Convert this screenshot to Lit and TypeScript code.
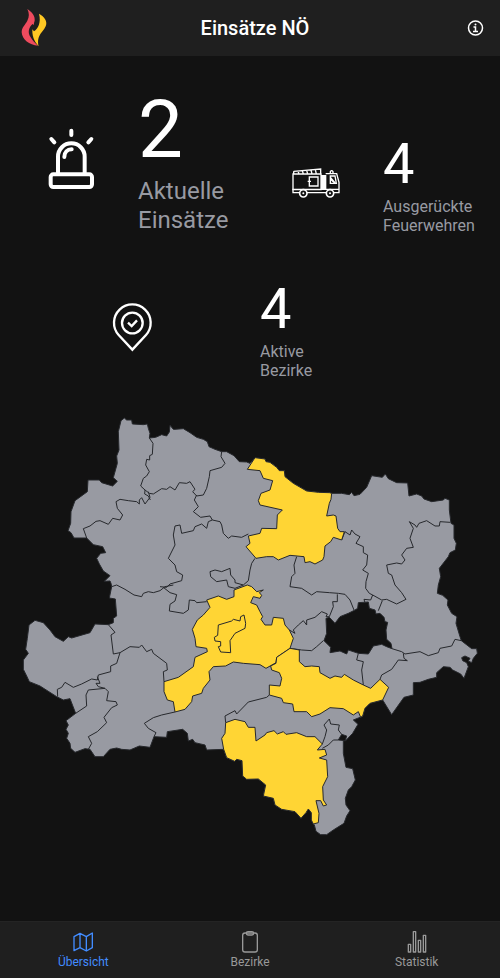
import { LitElement, html, svg, css } from "lit";
import { customElement, state } from "lit/decorators.js";
import { classMap } from "lit/directives/class-map.js";

const OUTLINE =
  "363,32 373,24 380,30 395,30 397,42 430,44 442,42 445,55 450,70 448,84 467,82 485,74 500,78 508,66 510,46 520,58 525,58 550,56 570,68 590,82 610,88 622,95 627,110 645,118 665,125 680,125 702,137 718,155 740,156 750,160 765,143 795,147 798,155 810,157 830,172 838,182 853,182 855,200 880,220 920,243 955,247 988,248 995,250 1025,250 1048,254 1055,247 1062,257 1080,253 1100,232 1115,197 1147,202 1156,192 1165,206 1190,218 1223,219 1227,258 1250,252 1265,258 1272,267 1295,275 1330,270 1335,265 1348,270 1348,300 1353,340 1362,345 1362,385 1369,400 1366,420 1350,428 1345,440 1318,475 1322,500 1315,525 1312,550 1328,556 1344,570 1342,585 1355,610 1371,620 1368,640 1380,680 1384,692 1415,716 1430,716 1432,730 1420,745 1415,758 1405,753 1410,745 1395,738 1385,743 1388,752 1400,758 1405,770 1392,805 1382,792 1358,780 1350,772 1330,770 1310,788 1310,802 1285,808 1260,817 1240,818 1240,855 1212,862 1175,914 1148,870 1110,880 1095,895 1088,918 1085,920 1060,930 1074,943 1058,970 1037,992 1030,992 1030,1030 1038,1072 1058,1076 1066,1110 1055,1130 1045,1140 1036,1165 1038,1185 1050,1202 1040,1218 1032,1240 1000,1260 980,1274 962,1274 948,1264 943,1245 940,1242 934,1230 934,1208 925,1197 918,1208 903,1225 885,1205 845,1198 825,1185 820,1165 790,1158 797,1125 775,1107 740,1108 728,1098 726,1052 710,1048 704,1054 680,1043 671,1018 620,1020 615,1005 585,998 578,988 565,993 562,970 548,958 502,965 500,982 462,980 450,1012 418,1008 390,1020 365,1018 350,1014 330,1018 310,1040 285,1040 270,1018 255,1016 225,1027 212,1015 210,1000 200,985 205,970 198,958 205,945 198,932 227,910 210,866 190,870 170,860 120,828 88,815 80,798 70,778 70,750 85,730 77,718 82,685 87,645 105,631 130,638 150,660 165,680 190,694 205,680 215,684 270,668 285,642 325,644 340,638 340,625 350,618 346,567 328,564 335,530 333,520 330,513 313,514 330,497 310,483 298,462 290,445 302,430 317,428 308,410 280,404 260,384 222,384 213,368 204,362 212,340 213,305 225,272 262,245 264,210 298,210 305,218 338,228 352,214 340,203 352,160 350,138 357,120 355,65";

const ACTIVE_DISTRICTS = [
  "742,178 765,143 795,147 798,155 810,157 830,172 838,182 853,182 855,200 880,220 920,243 955,247 988,248 995,250 993,268 988,280 980,318 1000,315 1008,318 1013,355 1020,365 1033,365 1025,390 1000,382 992,395 975,408 972,440 968,450 945,462 930,455 915,458 912,440 870,436 835,450 820,440 800,440 768,445 738,410 750,400 745,378 780,370 785,355 830,356 832,315 847,300 780,285 775,272 783,250 810,240 818,212 790,205 780,182",
  "742,525 755,530 770,545 790,540 778,548 785,556 780,565 760,560 752,578 770,585 780,605 788,620 783,628 795,645 815,645 820,622 850,625 855,645 868,660 880,685 870,715 830,742 828,758 798,775 780,764 730,760 700,756 677,768 640,770 627,785 630,810 610,835 605,850 578,858 575,875 555,898 525,906 520,875 502,870 492,845 492,815 535,802 580,770 585,742 622,725 620,715 588,710 585,685 577,658 592,630 610,615 630,592 620,570 655,558 680,568 702,560 702,540",
  "655,645 695,633 700,628 720,633 722,620 732,615 737,640 735,655 705,670 690,692 692,728 662,726 655,710 662,708 662,695 645,693 643,682 653,676",
  "870,715 898,720 898,755 915,770 935,768 958,770 960,788 990,805 1005,798 1025,802 1033,793 1060,810 1090,825 1112,835 1140,808 1166,832 1148,870 1110,880 1095,895 1088,918 1082,922 1075,905 1060,915 1030,896 990,893 960,912 935,920 920,905 882,905 878,882 850,878 845,865 808,855 808,825 840,828 845,805 838,788 815,780 812,768 828,760 830,742",
  "677,938 705,928 735,935 745,952 765,952 768,993 795,975 800,968 822,962 832,972 850,965 858,973 890,968 920,980 945,980 967,1002 952,1020 975,1018 980,1035 958,1044 980,1050 983,1100 968,1130 970,1170 980,1185 970,1188 962,1172 948,1172 957,1210 955,1238 940,1242 934,1230 934,1208 925,1197 918,1208 903,1225 885,1205 845,1198 825,1185 820,1165 790,1158 797,1125 775,1107 740,1108 728,1098 726,1052 710,1048 704,1054 680,1043 671,1018 665,985 675,970",
];

const GAPS = [
  "1075,578 1105,576 1108,595 1125,600 1128,612 1140,610 1152,622 1155,635 1163,637 1158,660 1160,688 1173,700 1176,716 1160,710 1145,703 1120,708 1105,732 1075,730 1045,720 1040,732 1020,723 990,728 992,712 972,692 980,670 978,625 988,622 1005,640 1020,620 1045,610 1065,600 1073,595",
  "1025,973 1040,978 1036,992 1015,990",
];

const BORDERS = [
  "448,84 459,100 457,133 449,137 449,150 440,148 437,165 448,185 440,198 430,205 422,228 435,240 434,252 445,258 451,270",
  "445,245 450,262 435,282 425,263 418,270 418,282 410,275 385,272 360,268 348,275 352,295 368,315 360,330 338,325 325,343 300,332 288,334 270,348 250,356 260,384",
  "435,240 448,250 460,252 485,236 500,238 510,230 525,240 538,218 560,220 570,215 585,238 578,245 590,258 610,255 620,235 628,200 630,182 665,172 675,160 663,140 665,125",
  "590,255 583,270 595,290 580,305 602,322 630,318 637,330 660,335 665,345 670,370 685,385 695,378 725,382 745,372",
  "637,330 625,335 620,355 605,342 585,350 580,362 545,370 540,345 525,348 520,375 525,405 505,445 525,465 530,485 548,495 545,512 510,522 500,532 480,530",
  "335,530 350,525 375,538 402,555 425,560 430,550 445,545 460,548 480,542 495,530 520,525",
  "490,532 510,548 530,554 525,573 510,583 508,603 550,610 565,600 568,570 585,572 590,578 620,575",
  "630,485 645,480 665,485 690,475 692,495 705,510 705,518 730,525 745,512 750,480 755,460 765,445",
  "630,485 632,500 650,515 680,510 685,530 705,535 730,525",
  "890,440 882,465 885,490 875,500 870,530 905,535 935,555 950,545 988,548 1015,550 1035,553 1050,570 1062,600",
  "1012,553 1012,575 998,575 1000,590 988,620 978,620 982,612 965,605 945,622 920,630 920,645 910,632 895,645 880,660 885,670 868,660",
  "870,715 905,720 935,722 950,710 970,692",
  "1025,390 1035,365 1050,375 1055,360 1065,372 1080,380 1068,400 1090,410 1090,428 1103,435 1100,465 1088,480 1105,490 1098,515 1097,535 1108,550 1118,555 1112,570 1092,568 1095,578",
  "1118,555 1145,570 1160,568 1190,582 1218,568 1205,548 1185,525 1175,495 1165,490 1160,465 1190,459 1205,462 1215,450 1205,435 1220,415 1240,412 1230,385 1240,355 1228,335 1245,345 1250,352 1257,340 1280,332 1305,348 1318,348 1320,335 1350,337",
  "1147,572 1135,602",
  "1176,716 1205,725 1215,732 1260,725 1285,737 1315,728 1320,715 1355,708 1365,688 1384,692",
  "1210,730 1212,745 1222,752 1195,750 1175,778 1145,795 1140,808",
  "1075,730 1070,750 1090,755 1085,780 1090,825",
  "325,644 345,667 333,675 340,732 360,728 350,760 332,768 332,785 295,795 292,810 275,807 245,822 220,832 195,817 185,832 172,838 173,860",
  "360,728 390,710 418,712 425,705 440,725 455,718 460,730 500,760 502,780 490,785 492,815",
  "292,800 300,820 288,820 295,830 315,835 265,840 258,855 260,888 227,910",
  "315,835 325,845 320,872 348,875 352,885 335,893 312,922 320,938 292,965 265,980 275,1000 265,1018",
  "525,906 485,915 460,923 433,940 445,955 468,968 462,980",
  "677,938 675,918 705,902 710,912 745,876 800,862 808,855",
  "967,1002 975,980 980,960 972,945 988,927 992,942 1018,945 1015,960 1025,973",
  "967,1015 985,1005 1000,990 1015,990",
];

const sirenIcon = html`<svg class="siren" viewBox="53 126 141 186" aria-hidden="true">
  <g fill="none" stroke="currentColor" stroke-width="12" stroke-linecap="round">
    <path d="M83 262V212a40 40 0 0 1 80 0V262" />
    <path d="M102 213c0-15 9-23 22-23" />
    <rect x="61" y="265" width="124" height="38" rx="8" />
    <path d="M123 134v13M63 159l9 10M183 159l-9 10" />
  </g>
</svg>`;

const truckIcon = html`<svg class="truck" viewBox="38 112 144 90" aria-hidden="true">
  <g fill="none" stroke="currentColor" stroke-width="4">
    <path d="M41 130H125V177H41zM43 122L124 115V129M43 122v8M56 121l3 9M69 120l3 10M82 119l3 11M95 118l3 12M108 117l3 13" />
    <path d="M90 139h26v27H90zM85 152h10" />
    <path d="M139 129H172L179 155V186H41V176H179M153 129v-6q4-6 8 0v6" />
    <path d="M153 136H167L171 158H153z" />
  </g>
  <path fill="currentColor" d="M125 133h16v43h-16zM153 137l17 20h-7l-10-9z" />
  <g fill="#121212" stroke="currentColor" stroke-width="5">
    <circle cx="72" cy="188" r="11" /><circle cx="152" cy="188" r="11" />
  </g>
  <g fill="currentColor"><circle cx="72" cy="188" r="3" /><circle cx="152" cy="188" r="3" /></g>
</svg>`;

const pinIcon = html`<svg class="pin" viewBox="36 84 123 147" aria-hidden="true">
  <g fill="none" stroke="currentColor" stroke-width="7">
    <path d="M97 224L56 180A55 55 0 1 1 138 180Z" />
    <circle cx="97" cy="144" r="31" />
    <path d="M84 143l11 10 16-17" />
  </g>
</svg>`;

interface Tab {
  id: string;
  label: string;
  icon: unknown;
}

const TABS: Tab[] = [
  {
    id: "overview",
    label: "Übersicht",
    icon: html`<svg viewBox="216 48 66 66" aria-hidden="true">
      <path d="M222 65L240 55L259 65L277 54V98L259 108L240 98L222 107ZM240 55V98M259 65V108" />
    </svg>`,
  },
  {
    id: "districts",
    label: "Bezirke",
    icon: html`<svg viewBox="717 48 66 66" aria-hidden="true">
      <rect x="728" y="54" width="44" height="57" rx="7" /><rect x="739" y="50" width="22" height="10" rx="5" />
    </svg>`,
  },
  {
    id: "statistics",
    label: "Statistik",
    icon: html`<svg viewBox="1218 48 66 66" aria-hidden="true">
      <path d="M1225 88h7v23h-7zM1240 50h7v61h-7zM1255 76h7v35h-7zM1270 61h7v50h-7z" />
    </svg>`,
  },
];

@customElement("district-map")
export class DistrictMap extends LitElement {
  static styles = css`
    :host { display: block; }
    .map { display: block; width: 100%; height: auto; }
    .shape { stroke: #26282c; stroke-width: 3; stroke-linejoin: round; }
    .land { fill: #989aa2; }
    .active { fill: #ffd534; }
    .gap { fill: #121212; }
    .border { fill: none; }
  `;

  render() {
    return html`<svg class="map" viewBox="60 15 1380 1270" role="img" aria-label="Karte der Bezirke in Niederösterreich">
      <polygon class="shape land" points=${OUTLINE}></polygon>
      ${GAPS.map((p) => svg`<polygon class="shape gap" points=${p}></polygon>`)}
      ${BORDERS.map((p) => svg`<polyline class="shape border" points=${p}></polyline>`)}
      ${ACTIVE_DISTRICTS.map((p) => svg`<polygon class="shape active" points=${p}></polygon>`)}
    </svg>`;
  }
}

@customElement("app-root")
export class AppRoot extends LitElement {
  static styles = css`
    :host {
      display: flex;
      flex-direction: column;
      min-height: 100vh;
      background: #121212;
      color: #fff;
      font-family: Roboto, "Liberation Sans", sans-serif;
    }
    * { box-sizing: border-box; }
    button { padding: 0; border: 0; background: none; color: inherit; font: inherit; cursor: pointer; }
    .header {
      display: grid;
      grid-template-columns: 60px 1fr 50px;
      align-items: center;
      height: 56px;
      background: #1f1f1f;
    }
    .logo { width: 28px; height: 40px; margin-left: 20px; }
    .title { margin: 0; text-align: center; font-size: 20px; line-height: 24px; font-weight: 500; }
    .info { display: grid; place-items: center; width: 50px; height: 48px; }
    .info svg { width: 18px; height: 18px; }
    .content { flex: 1; padding: 34px 0 40px; }
    .stats { display: grid; grid-template-columns: 49% 51%; row-gap: 46px; align-items: end; }
    .stat { display: grid; grid-template-columns: 126px 1fr; column-gap: 4px; align-items: center; padding-left: 8px; }
    .stat.wide { grid-column: 1 / -1; margin-left: 12%; grid-template-columns: 128px 1fr; column-gap: 64px; }
    .icon { display: grid; place-items: center; padding-bottom: 6px; }
    .siren { width: 47px; height: 62px; }
    .truck { width: 48px; height: 30px; }
    .pin { width: 41px; height: 49px; }
    .value { margin: 0 0 5px; font-size: 56px; line-height: 56px; }
    .label { margin: 0; font-size: 16px; line-height: 19px; color: #989aa2; }
    .large .icon { padding-bottom: 8px; }
    .large .value { margin-bottom: 7px; font-size: 80px; line-height: 80px; }
    .large .label { font-size: 24px; line-height: 29px; }
    .districts { margin: 35px 4% 0; }
    .tabs {
      position: sticky;
      bottom: 0;
      display: grid;
      grid-template-columns: repeat(3, 1fr);
      height: 57px;
      background: #1f1f1f;
      border-top: 1px solid #242424;
    }
    .tab {
      display: flex;
      flex-direction: column;
      align-items: center;
      justify-content: center;
      gap: 1px;
      padding-top: 1px;
      color: #999;
      font-size: 12px;
      line-height: 16px;
    }
    .tab.selected { color: #428cff; }
    .tab svg { width: 22px; height: 22px; fill: none; stroke: currentColor; stroke-width: 4; stroke-linejoin: round; }
  `;

  @state() private selected = "overview";

  private stat(icon: unknown, value: number, first: string, second: string, kind = "") {
    return html`<section class="stat ${kind}">
      <div class="icon">${icon}</div>
      <div>
        <p class="value">${value}</p>
        <p class="label">${first}<br />${second}</p>
      </div>
    </section>`;
  }

  render() {
    return html`
      <header class="header">
        <svg class="logo" viewBox="60 24 84 120" aria-hidden="true">
          <path fill="#ee4b5e" d="M82 27C96 36 106 48 104 62C103 66 101 69 102 75L98 72C86 82 82 98 92 112C97 121 106 130 114 137C88 136 66 118 65 97C65 82 76 74 82 62C88 50 88 40 82 27Z" />
          <path fill="#ffc823" d="M117 41C134 50 142 64 138 76C132 96 108 104 116 139C108 128 96 118 97 88L102 94C114 86 124 68 117 41Z" />
        </svg>
        <h1 class="title">Einsätze NÖ</h1>
        <button class="info" aria-label="Information">
          <svg viewBox="0 0 36 36" fill="none" stroke="currentColor" stroke-width="3" aria-hidden="true">
            <circle cx="19" cy="18" r="14" />
            <path d="M15 16H19V25M14 25H24" />
            <circle cx="19" cy="11" r="2" fill="currentColor" stroke="none" />
          </svg>
        </button>
      </header>
      <main class="content">
        <div class="stats">
          ${this.stat(sirenIcon, 2, "Aktuelle", "Einsätze", "large")}
          ${this.stat(truckIcon, 4, "Ausgerückte", "Feuerwehren")}
          ${this.stat(pinIcon, 4, "Aktive", "Bezirke", "wide")}
        </div>
        <district-map class="districts"></district-map>
      </main>
      <nav class="tabs">
        ${TABS.map(
          (tab) => html`<button
            class=${classMap({ tab: true, selected: this.selected === tab.id })}
            aria-pressed=${this.selected === tab.id}
            @click=${() => (this.selected = tab.id)}
          >
            ${tab.icon}<span>${tab.label}</span>
          </button>`
        )}
      </nav>
    `;
  }
}
